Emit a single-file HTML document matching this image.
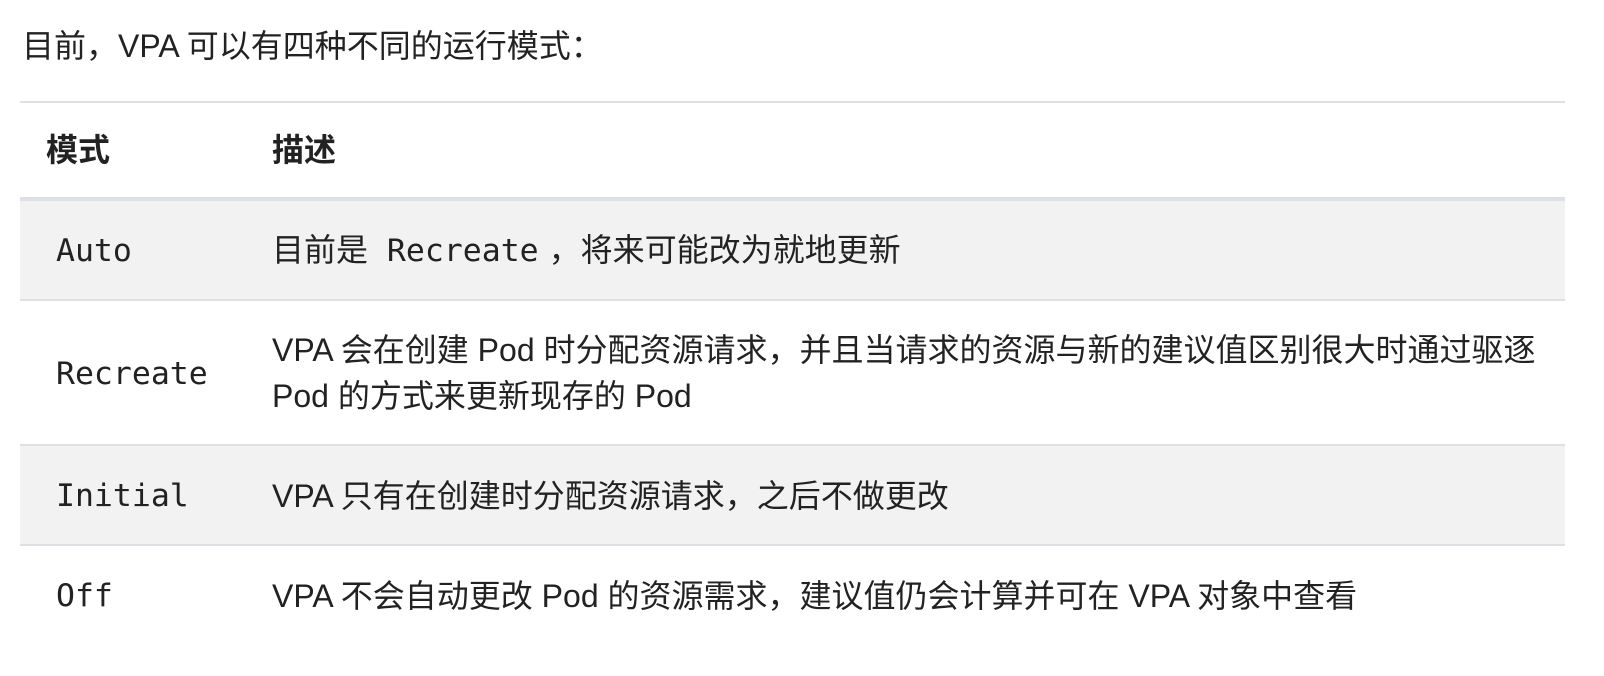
<!DOCTYPE html>
<html><head><meta charset="utf-8"><style>
body{margin:0;width:1604px;height:676px;background:#fff;color:#222;font-family:"Liberation Sans","Noto Sans CJK SC",sans-serif;font-size:32px;line-height:46px;overflow:hidden}
p{position:absolute;left:22px;top:23px;margin:0}
table{position:absolute;left:20px;top:101px;width:1545px;border-collapse:collapse}
th,td{text-align:left;padding:26px 10px 25px 26px;vertical-align:middle}
th{font-weight:bold;border-top:2px solid #dde0e4;border-bottom:4px solid #dde0e4;height:46px;padding-top:24px;padding-bottom:24px}
td{border-bottom:2px solid #dde0e4}
tr:last-child td{border-bottom:none}
tr.g td{background:#f2f2f2}
td:first-child,th:first-child{width:190px}
code{font-family:"DejaVu Sans Mono",monospace;font-size:31.5px;padding:0 10px}
td:first-child code{padding:0 0 0 10px}
</style></head><body>
<p>目前，VPA 可以有四种不同的运行模式：</p>
<table>
<tr><th>模式</th><th>描述</th></tr>
<tr class="g"><td><code>Auto</code></td><td>目前是 <code>Recreate</code>，将来可能改为就地更新</td></tr>
<tr><td><code>Recreate</code></td><td>VPA 会在创建 Pod 时分配资源请求，并且当请求的资源与新的建议值区别很大时通过驱逐 Pod 的方式来更新现存的 Pod</td></tr>
<tr class="g"><td><code>Initial</code></td><td>VPA 只有在创建时分配资源请求，之后不做更改</td></tr>
<tr><td><code>Off</code></td><td>VPA 不会自动更改 Pod 的资源需求，建议值仍会计算并可在 VPA 对象中查看</td></tr>
</table>
</body></html>
